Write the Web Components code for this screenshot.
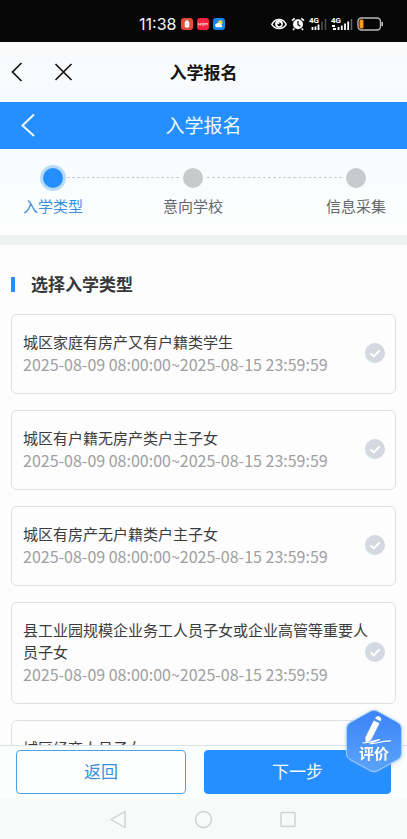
<!DOCTYPE html>
<html lang="zh-CN">
<head>
<meta charset="utf-8">
<meta name="viewport" content="width=device-width, initial-scale=1">
<title>入学报名</title>
<style>
  body { margin: 0; font-family: "Noto Sans CJK SC", "Noto Sans", sans-serif; background: #fcfdfd; }
</style>
</head>
<body>
<enroll-screen></enroll-screen>
<script>
const define = (name, html, setup) => {
  const template = document.createElement('template');
  template.innerHTML = html;
  customElements.define(name, class extends HTMLElement {
    constructor() {
      super();
      this.attachShadow({ mode: 'open' }).append(template.content.cloneNode(true));
    }
    connectedCallback() { if (setup) setup(this, this.shadowRoot); }
  });
};

define('status-bar', `
<style>
  :host { display: flex; flex: none; align-items: center; justify-content: space-between; box-sizing: border-box;
    height: 42px; padding: 6px 23px 0 139px; background: #060606; color: #f4f4f4; }
  div { display: flex; align-items: center; gap: 4px; }
  time { font: 400 16px/20px Inter, sans-serif; margin-right: 1px; }
  svg { display: block; flex: none; }
</style>
<div>
  <time>11:38</time>
  <svg width="12" height="12" viewBox="0 0 12 12"><rect width="12" height="12" rx="3" fill="#df4c38"/><rect x="3.7" y="3" width="4.6" height="6.6" rx="1.6" fill="#fff"/><path d="M4.5 2.5h3M6 5v2.5" stroke="#f5b3a8"/></svg>
  <svg width="12" height="12" viewBox="0 0 12 12"><rect width="12" height="12" rx="3" fill="#f5213f"/><path d="M1.5 5v2.4M1.5 6.2h2M3.5 5v2.4M5 5.2h1.8v2H5zM8 7.4V5l1 1.4L10.200 5v2.400" fill="none" stroke="#ffd4da" stroke-width=".8"/></svg>
  <svg width="12" height="12" viewBox="0 0 12 12"><rect width="12" height="12" rx="3" fill="#1487ea"/><circle cx="7.300" cy="4.600" r="2.300" fill="#ffd13c"/><path d="M3.500 9.300a1.900 1.900 0 0 1 .2-3.700 2.300 2.300 0 0 1 4.100.8 1.500 1.500 0 0 1 .4 2.900z" fill="#fff"/></svg>
</div>
<div>
  <svg width="16" height="14" viewBox="0 0 16 14"><path d="M.8 7.300C4.300.9 11.700.9 15.200 7.300 11.700 12.900 4.300 12.900.8 7.300z" fill="none" stroke="#fff" stroke-width="1.500"/><circle cx="8" cy="6.800" r="3.900" fill="#fff"/><circle cx="8.300" cy="7.300" r="1.900" fill="#060606"/><circle cx="7.400" cy="6.300" r=".9" fill="#fff"/></svg>
  <svg width="14" height="14" viewBox="0 0 14 14"><circle cx="7" cy="7.300" r="5" fill="#fff"/><path d="M1 3.700 3.700 1.300M13 3.700 10.300 1.300M3.300 11.400 2 13M10.700 11.400 12 13" stroke="#fff" stroke-width="1.600"/><path d="M7 4v3.700l2.300 1.500" fill="none" stroke="#060606" stroke-width="1.200"/></svg>
  <svg width="18" height="14" viewBox="0 0 18 14"><text x="0" y="6" font-family="Roboto, sans-serif" font-size="8" font-weight="700" fill="#fff">4G</text><path d="M3.500 13v-3M6.500 13V9.500M9.500 13V7.500" stroke="#fff" stroke-width="1.800"/><path d="M13 13V4.500M16.500 13V2" stroke="#555" stroke-width="1.500"/></svg>
  <svg width="22" height="14" viewBox="0 0 22 14"><text x="0" y="6" font-family="Roboto, sans-serif" font-size="8" font-weight="700" fill="#fff">4G</text><path d="M1 9h3M2 12h3M7.500 13v-3M10.800 13V8.500M14 13V6.500M17.200 13V4.500" stroke="#fff" stroke-width="1.800"/><path d="M20.500 13V2" stroke="#666" stroke-width="1.500"/></svg>
  <svg width="27" height="14" viewBox="0 0 27 14"><rect x="1" y="1" width="22.500" height="12" rx="3.500" fill="none" stroke="#b9b9b9" stroke-width="1.400"/><rect x="2.500" y="2.600" width="4" height="8.800" rx="1.500" fill="#ff981d"/><path d="M25.200 5v4" stroke="#b9b9b9" stroke-width="1.600"/></svg>
</div>`);

define('title-bar', `
<style>
  :host { display: grid; flex: none; grid-template-columns: 1fr auto 1fr; align-items: center; box-sizing: border-box;
    height: 60px; background: linear-gradient(#fafafb, #f8fbfd); color: #151515; }
  :host([tone="blue"]) { height: 47px; background: #268fff; color: #f2faff; }
  h1 { margin: 0; font-size: 17px; line-height: 24px; font-weight: 700; }
  :host([tone="blue"]) h1 { font-size: 19px; font-weight: 400; padding-bottom: 2px; }
  div { display: flex; padding-left: 6px; gap: 22px; }
  :host([tone="blue"]) div { padding: 0 0 2px 16px; }
</style>
<div><slot></slot></div><h1><slot name="title"></slot></h1>`);

define('icon-button', `
<style>
  :host { display: block; }
  button { display: block; width: 24px; height: 24px; padding: 0; border: 0; background: none; color: inherit; }
  svg { display: block; }
  path { display: none; fill: none; stroke: currentColor; stroke-width: 1.700; }
  :host([kind="back"]) .back, :host([kind="close"]) .close { display: block; }
  :host([kind="back-large"]) .large { display: block; stroke-width: 2; }
</style>
<button type="button"><svg width="24" height="24" viewBox="0 0 24 24">
  <path class="back" d="M15.500 3 6.500 12l9 9"/><path class="close" d="m3.500 4 16 16M19.500 4l-16 16"/><path class="large" d="M18 1.500 6.500 12.500 18 23"/>
</svg></button>`, (host, root) => root.querySelector('button').setAttribute('aria-label', host.getAttribute('label')));

define('step-item', `
<style>
  :host { display: flex; flex-direction: column; align-items: center; gap: 4px; font-size: 15px; line-height: 22px; color: #66686b; white-space: nowrap; }
  i { width: 20px; height: 20px; margin: 3px; border-radius: 50%; background: #c8c9cc; }
  :host([active]) { color: #3990dd; }
  :host([active]) i { background: #268fff; box-shadow: 0 0 0 3px #b9dcf6; }
</style>
<i></i><span><slot></slot></span>`);

define('step-progress', `
<style>
  :host { display: grid; flex: none; grid-template-columns: auto 80fr auto 103fr auto; padding: 16px 21px 18px 23px;
    background: linear-gradient(#f7fcff, #fdfefd); border-bottom: 10px solid #edf2f2; }
  hr { align-self: start; margin: 12px -16px 0; border: 0; border-top: 1px dashed #c9cacd; }
</style>
<step-item active>入学类型</step-item><hr><step-item>意向学校</step-item><hr><step-item>信息采集</step-item>`);

define('section-title', `
<style>
  :host { display: flex; align-items: center; gap: 16px; padding: 27px 0 18px; }
  i { width: 4px; height: 15px; background: #268fff; }
  h2 { margin: 0; font-size: 17px; line-height: 24px; font-weight: 700; color: #383838; }
</style>
<i></i><h2><slot></slot></h2>`);

define('type-card', `
<style>
  :host { display: block; }
  label { display: grid; align-items: center; padding: 16px 10px 18px 11px;
    border: 1px solid #dedfe0; border-radius: 6px; background: #fdfdfd; line-height: 22px; }
  .text, .mark { grid-area: 1 / 1; }
  .text { padding-right: 12px; }
  strong, small { display: block; font-weight: 400; }
  strong { font-size: 15px; color: #3c3c3c; }
  small { font-size: 16px; color: #a0a0a0; white-space: nowrap; }
  .mark { display: grid; justify-self: end; }
  input, svg { grid-area: 1 / 1; width: 20px; height: 20px; margin: 0; }
  input { appearance: none; border-radius: 50%; background: #d3d9e0; }
  input:checked { background: #268fff; }
  svg { pointer-events: none; z-index: 1; }
</style>
<label><span class="text"><strong><slot></slot></strong><small>2025-08-09 08:00:00~2025-08-15 23:59:59</small></span>
<span class="mark"><input type="radio"><svg viewBox="0 0 20 20"><path d="m5.500 10.200 3.200 3.200 6-6.200" fill="none" stroke="#fff" stroke-width="2"/></svg></span></label>`);

define('action-bar', `
<style>
  :host { display: grid; flex: none; grid-template-columns: 170fr 187fr; gap: 18px; padding: 4px 16px 5px; position: relative;
    background: #fcfefe; border-top: 1px solid #dde0e2; }
  button { height: 44px; padding: 0 0 2px; border: 1px solid #4ba1e4; border-radius: 4px; background: #fdfefe; color: #3990dd;
    font: 400 17px/24px "Noto Sans CJK SC", sans-serif; }
  .next { background: #268fff; border-color: #268fff; color: #f4faff; }
  rate-badge { position: absolute; right: 4px; bottom: 26px; }
</style>
<button type="button">返回</button><button type="button" class="next">下一步</button><rate-badge>评价</rate-badge>`);

define('rate-badge', `
<style>
  :host { display: block; }
  button { display: grid; width: 58px; height: 64px; padding: 0; border: 0; background: none; color: #fff; }
  svg, span { grid-area: 1 / 1; }
  svg { filter: drop-shadow(0 1px 2px #5d9bea66); }
  span { align-self: end; padding-bottom: 9px; font: 700 15px/22px "Noto Sans CJK SC", sans-serif; z-index: 1; }
</style>
<button type="button">
  <svg width="58" height="64" viewBox="0 0 58 64">
    <defs><linearGradient id="g" x2="0" y2="1"><stop stop-color="#3b83f8"/><stop offset="1" stop-color="#5ba4fa"/></linearGradient></defs>
    <path d="M25.500 2.200q3.500-2 7 0L53 13.500q3.500 2 3.500 6v25q0 4-3.500 6L32.500 61.800q-3.500 2-7 0L5 50.500q-3.500-2-3.500-6v-25q0-4 3.500-6z" fill="url(#g)" stroke="#a8d4f8"/>
    <path d="m28.800 11.500 5.700 2.700-8.300 16.600-4.700 3.200-.8-1-.4-4.600z" fill="#fff"/>
    <path d="m30 9.500 1.200-1.800q1.300-1 3.200-.1t1.900 2.700l-.8 1.900z" fill="#fff"/>
    <path d="M17.500 34c7-.5 12-2.500 17.500-3.500-3.500 1.500-7 2.300-9.500 4.200 4.500.5 9-2.700 20.500-2.900" fill="none" stroke="#fff" stroke-width="1.200"/>
  </svg><span><slot></slot></span>
</button>`);

define('system-nav', `
<style>
  :host { display: flex; flex: none; justify-content: center; align-items: center; gap: 66px; height: 40px; background: #f8fafa; }
  button { width: 19px; height: 19px; padding: 0; border: 0; background: none; }
  svg { display: block; fill: none; stroke: #cfd0d1; stroke-width: 1.400; }
</style>
<button type="button" aria-label="返回"><svg width="19" height="19" viewBox="0 0 19 19"><path d="M16 1.500v16L2 9.500z" stroke-linejoin="round"/></svg></button>
<button type="button" aria-label="主页"><svg width="19" height="19" viewBox="0 0 19 19"><circle cx="9.500" cy="9.500" r="8"/></svg></button>
<button type="button" aria-label="最近任务"><svg width="19" height="19" viewBox="0 0 19 19"><rect x="2" y="2.500" width="14" height="14" rx="1"/></svg></button>`);

define('enroll-screen', `
<style>
  :host { display: flex; flex-direction: column; height: 100vh; }
  main { flex: 1; min-height: 0; overflow: auto; scrollbar-width: none; padding: 0 11px; background: #fdfdfd; }
  .cards { display: grid; gap: 16px; padding-bottom: 16px; }
</style>
<status-bar></status-bar>
<title-bar><icon-button kind="back" label="返回"></icon-button><icon-button kind="close" label="关闭"></icon-button><span slot="title">入学报名</span></title-bar>
<title-bar tone="blue"><icon-button kind="back-large" label="返回"></icon-button><span slot="title">入学报名</span></title-bar>
<step-progress></step-progress>
<main>
  <section-title>选择入学类型</section-title>
  <div class="cards">
    <type-card>城区家庭有房产又有户籍类学生</type-card>
    <type-card>城区有户籍无房产类户主子女</type-card>
    <type-card>城区有房产无户籍类户主子女</type-card>
    <type-card>县工业园规模企业务工人员子女或企业高管等重要人员子女</type-card>
    <type-card>城区经商人员子女</type-card>
  </div>
</main>
<action-bar></action-bar>
<system-nav></system-nav>`, (host, root) => {
  const radios = [...root.querySelectorAll('type-card')].map(card => card.shadowRoot.querySelector('input'));
  radios.forEach(radio => radio.addEventListener('change', () => radios.forEach(other => { other.checked = other === radio; })));
});
</script>
</body>
</html>
